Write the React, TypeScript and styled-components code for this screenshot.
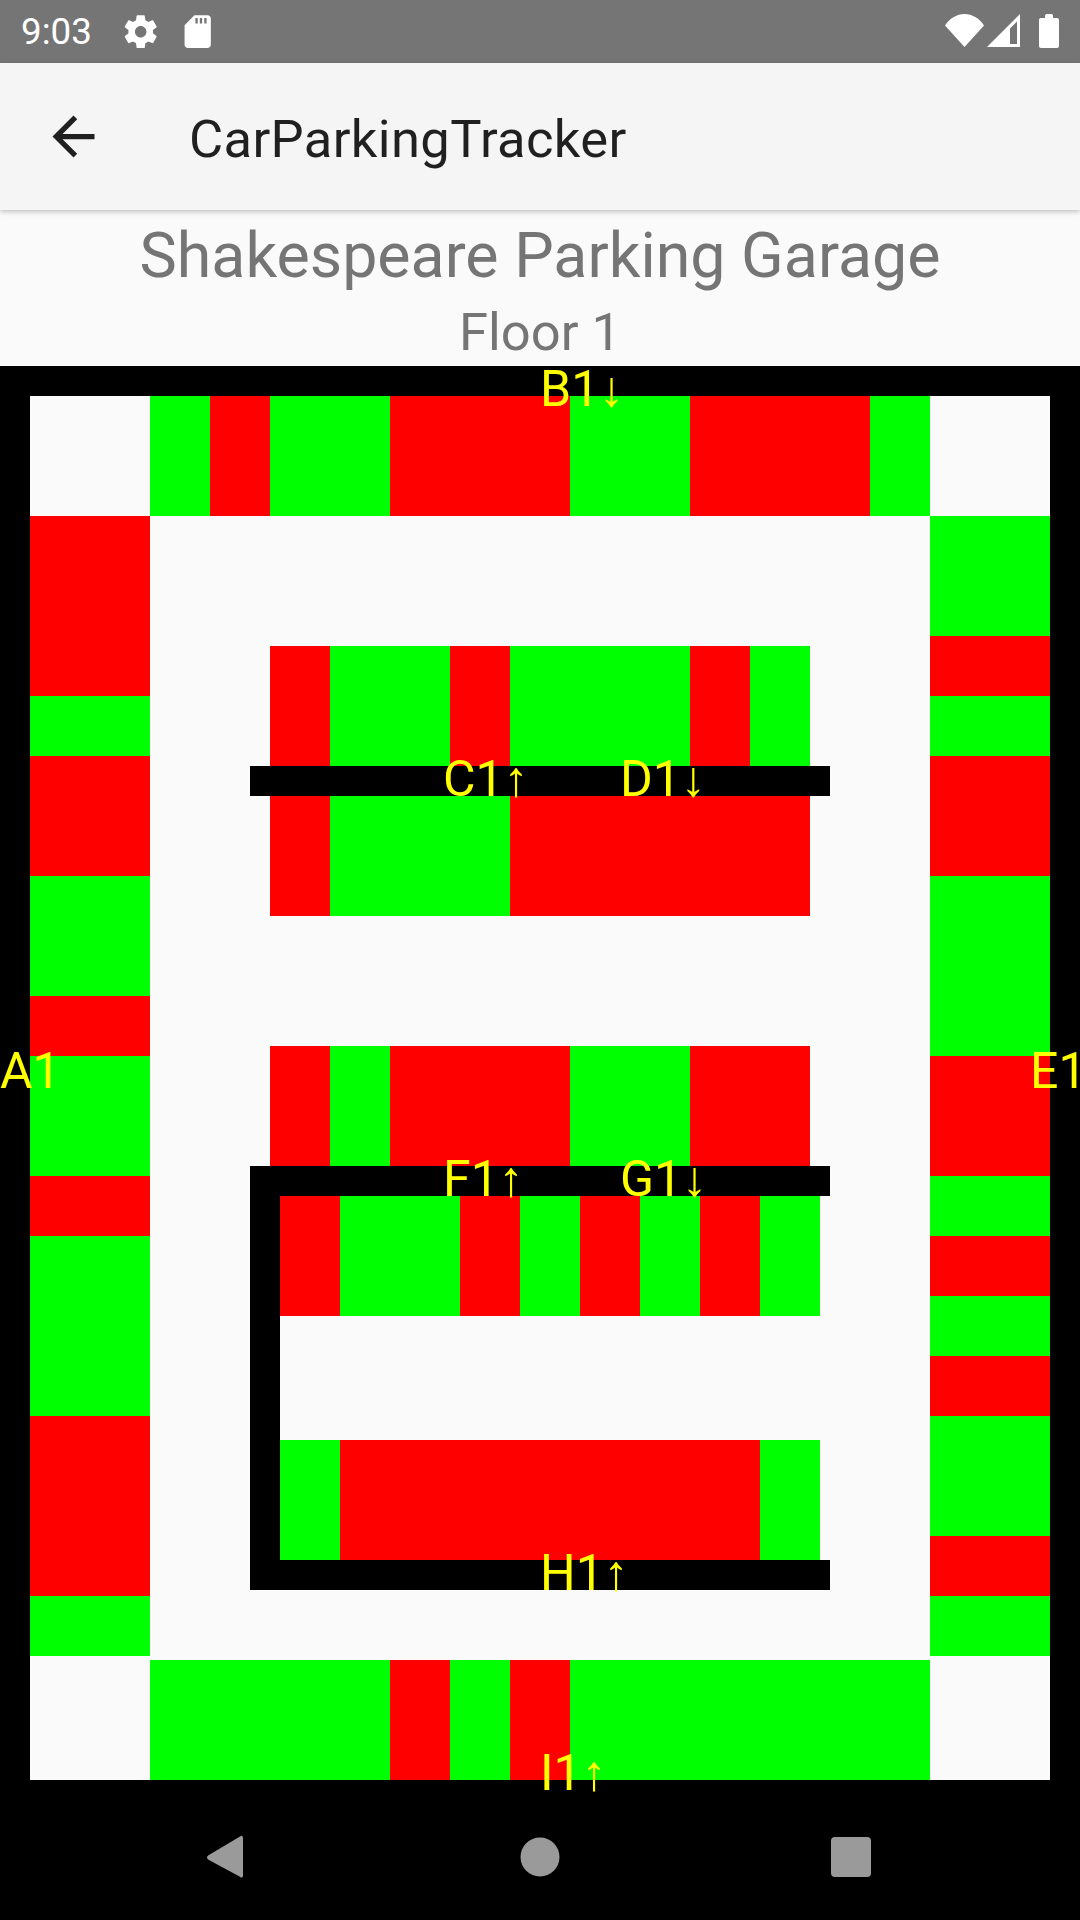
import React from "react";
import styled, { createGlobalStyle } from "styled-components";

const GlobalStyle = createGlobalStyle`
  html, body {
    margin: 0;
    padding: 0;
    background: #fafafa;
    font-family: Roboto, "Liberation Sans", sans-serif;
  }
`;

const Screen = styled.div`
  width: 1080px;
  height: 1920px;
  display: flex;
  flex-direction: column;
  overflow: hidden;
`;

const StatusBar = styled.div`
  height: 63px;
  flex: none;
  display: flex;
  align-items: center;
  padding: 0 21px 0 21px;
  background: #757575;
  color: #fff;
`;

const Clock = styled.span`
  font-size: 36.75px;
  line-height: 63px;
  width: 100px;
`;

const StatusIcon = styled.svg`
  width: 39.4px;
  height: 39.4px;
  fill: #fff;
  flex: none;
  margin-right: 18px;
`;

const StatusRight = styled.svg`
  margin-left: auto;
  margin-right: 0;
  width: 120px;
  height: 63px;
  flex: none;
`;

const AppBar = styled.header`
  position: relative;
  z-index: 1;
  height: 147px;
  flex: none;
  display: flex;
  align-items: center;
  padding-left: 42px;
  background: #f5f5f5;
  box-shadow: 0 2px 5px rgba(0, 0, 0, 0.22);
`;

const BackIcon = styled.svg`
  width: 63px;
  height: 63px;
  fill: rgba(0, 0, 0, 0.87);
  flex: none;
`;

const AppTitle = styled.h1`
  margin: 5px 0 0 84px;
  font-size: 52.5px;
  font-weight: 400;
  letter-spacing: 0.36px;
  color: rgba(0, 0, 0, 0.87);
`;

const Header = styled.div`
  height: 156px;
  flex: none;
  box-sizing: border-box;
  padding-top: 9px;
  text-align: center;
  color: #757575;
`;

const GarageName = styled.div`
  font-size: 62.7px;
  line-height: 74px;
`;

const FloorName = styled.div`
  margin-top: 8px;
  font-size: 52.5px;
  line-height: 62px;
`;

const Frame = styled.div`
  position: relative;
  flex: none;
  height: 1428px;
  box-sizing: border-box;
  padding: 30px 30px 14px;
  background: #000;
`;

const Lot = styled.div`
  height: 100%;
  display: grid;
  grid-template-columns: 120px 780px 120px;
  grid-template-rows: 120px 1144px 120px;
  background: #fafafa;
`;

const StallRow = styled.div<{ $col?: number; $row?: number }>`
  display: flex;
  height: 120px;
  grid-column: ${(p) => p.$col ?? "auto"};
  grid-row: ${(p) => p.$row ?? "auto"};
`;

const StallColumn = styled.div<{ $col: number }>`
  display: flex;
  flex-direction: column;
  height: 1140px;
  grid-column: ${(p) => p.$col};
  grid-row: 2;
`;

const Stall = styled.div<{ $taken: boolean }>`
  flex: 0 0 60px;
  background: ${(p) => (p.$taken ? "#ff0000" : "#00ff00")};
`;

const Lanes = styled.div`
  grid-column: 2;
  grid-row: 2;
  display: flex;
  flex-direction: column;
  gap: 130px;
  padding: 130px 0 0 120px;
`;

const Block = styled.div`
  width: 540px;
`;

const Wall = styled.div`
  width: 580px;
  height: 30px;
  margin-left: -20px;
  background: #000;
`;

const Enclosure = styled.div`
  width: 550px;
  margin-left: -20px;
  border-left: 30px solid #000;
  display: flex;
  flex-direction: column;
  gap: 124px;
`;

const Label = styled.span<{ $x: number; $y: number }>`
  position: absolute;
  left: ${(p) => p.$x}px;
  top: ${(p) => p.$y}px;
  font-family: Roboto, "Liberation Sans", sans-serif;
  font-size: 50px;
  line-height: 50px;
  color: #ffff00;
  white-space: nowrap;
`;

const NavBar = styled.nav`
  height: 126px;
  flex: none;
  background: #000;
`;

const NavIcons = styled.svg`
  display: block;
  width: 1080px;
  height: 126px;
  fill: #9a9a9a;
`;

const stalls = (plan: string) =>
  plan.split("").map((c, i) => <Stall key={i} $taken={c === "r"} />);

const labels: [string, number, number][] = [
  ["A1", 0, 680],
  ["B1↓", 540, -2],
  ["C1↑", 443, 388],
  ["D1↓", 620, 388],
  ["E1", 1030, 680],
  ["F1↑", 443, 788],
  ["G1↓", 620, 788],
  ["H1↑", 540, 1182],
  ["I1↑", 540, 1382],
];

export default function App() {
  return (
    <Screen>
      <GlobalStyle />
      <StatusBar>
        <Clock>9:03</Clock>
        <StatusIcon viewBox="0 0 24 24">
          <path d="M19.43 12.98c.04-.32.07-.64.07-.98s-.03-.66-.07-.98l2.11-1.65c.19-.15.24-.42.12-.64l-2-3.46c-.12-.22-.39-.3-.61-.22l-2.49 1c-.52-.4-1.08-.73-1.69-.98l-.38-2.65C14.46 2.18 14.25 2 14 2h-4c-.25 0-.46.18-.49.42l-.38 2.65c-.61.25-1.17.59-1.69.98l-2.49-1c-.23-.09-.49 0-.61.22l-2 3.46c-.13.22-.07.49.12.64l2.11 1.65c-.04.32-.07.65-.07.98s.03.66.07.98l-2.11 1.65c-.19.15-.24.42-.12.64l2 3.46c.12.22.39.3.61.22l2.49-1c.52.4 1.08.73 1.69.98l.38 2.65c.03.24.24.42.49.42h4c.25 0 .46-.18.49-.42l.38-2.65c.61-.25 1.17-.59 1.69-.98l2.49 1c.23.09.49 0 .61-.22l2-3.46c.12-.22.07-.49-.12-.64l-2.01-1.65zM12 15.5c-1.93 0-3.5-1.57-3.5-3.5s1.57-3.5 3.5-3.5 3.5 1.57 3.5 3.5-1.57 3.5-3.5 3.5z" />
        </StatusIcon>
        <StatusIcon viewBox="0 0 24 24">
          <path d="M18 2h-8L4.02 8 4 20c0 1.1.9 2 2 2h12c1.1 0 2-.9 2-2V4c0-1.1-.9-2-2-2zM12 7h-1.4V3.6H12V7zm2.7 0h-1.4V3.6h1.4V7zm2.7 0H16V3.6h1.4V7z" />
        </StatusIcon>
        {/* x 939 to 1059 of the screen */}
        <StatusRight viewBox="939 0 120 63">
          <path fill="#fff" d="M945 25.5C950 18 957 14 964.5 14s14.500 4 19.500 11.500L964.500 47z" />
          <path
            fill="#fff"
            fillRule="evenodd"
            d="M1020 14v33h-33zM1017 21.500 1010 28.500V44h7z"
          />
          <path
            fill="#fff"
            d="M1045 16c0-1 .6-2 1.600-2h5c1 0 1.400 1 1.400 2v2h4c1.200 0 2 .8 2 2v26c0 1.200-.8 2-2 2h-16c-1.200 0-2-.8-2-2V20c0-1.200.8-2 2-2h4z"
          />
        </StatusRight>
      </StatusBar>
      <AppBar>
        <BackIcon viewBox="0 0 24 24">
          <path d="M20 11H7.830l5.590-5.590L12 4l-8 8 8 8 1.410-1.410L7.830 13H20v-2z" />
        </BackIcon>
        <AppTitle>CarParkingTracker</AppTitle>
      </AppBar>
      <Header>
        <GarageName>Shakespeare Parking Garage</GarageName>
        <FloorName>Floor 1</FloorName>
      </Header>
      <Frame>
        <Lot>
          <StallRow $col={2} $row={1}>{stalls("grggrrrggrrrg")}</StallRow>
          <StallColumn $col={1}>{stalls("rrrgrrggrggrgggrrrg")}</StallColumn>
          <Lanes>
            <Block>
              <StallRow>{stalls("rggrgggrg")}</StallRow>
              <Wall />
              <StallRow>{stalls("rgggrrrrr")}</StallRow>
            </Block>
            <Block>
              <StallRow>{stalls("rgrrrggrr")}</StallRow>
              <Wall />
              <Enclosure>
                <StallRow>{stalls("rggrgrgrg")}</StallRow>
                <StallRow>{stalls("grrrrrrrg")}</StallRow>
              </Enclosure>
              <Wall />
            </Block>
          </Lanes>
          <StallColumn $col={3}>{stalls("ggrgrrgggrrgrgrggrg")}</StallColumn>
          <StallRow $col={2} $row={3}>{stalls("ggggrgrgggggg")}</StallRow>
        </Lot>
        {labels.map(([text, x, y]) => (
          <Label key={text} $x={x} $y={y}>
            {text}
          </Label>
        ))}
      </Frame>
      <NavBar>
        <NavIcons viewBox="0 1794 1080 126">
          <path d="M243 1838.500v37c0 2-1.600 2.800-3 1.200l-31.500-17c-2-1.200-2-3.300 0-4.500l31.500-18.700c1.400-1.400 3-.8 3 2z" />
          <circle cx="540" cy="1857" r="19.500" />
          <rect x="831" y="1837" width="40" height="40" rx="4" />
        </NavIcons>
      </NavBar>
    </Screen>
  );
}
